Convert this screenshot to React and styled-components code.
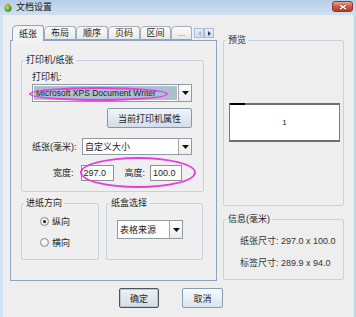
import React from 'react';
import styled, { createGlobalStyle } from 'styled-components';

const GlobalStyle = createGlobalStyle`
  html, body {
    margin: 0;
    padding: 0;
    background: #eeeeee;
  }
  body {
    font-family: "Liberation Sans", "Noto Sans CJK SC", sans-serif;
    font-size: 9px;
    color: #1e1e1e;
  }
  * {
    box-sizing: border-box;
  }
`;

const Window = styled.div`
  width: 356px;
  height: 317px;
  display: flex;
  flex-direction: column;
  overflow: hidden;
  background: #eeeeee;
`;

const TitleBar = styled.div`
  height: 15px;
  flex: none;
  display: flex;
  align-items: flex-start;
  padding-left: 4px;
  background: linear-gradient(#b7cee8, #d0e0f2);
`;

const TitleIcon = styled.svg`
  margin-top: 3px;
  flex: none;
`;

const Title = styled.span`
  margin-left: 4px;
  line-height: 14px;
  color: #1a1a1a;
`;

const CloseButton = styled.div`
  margin-left: auto;
  margin-right: 3px;
  margin-top: 1px;
  width: 21px;
  height: 11px;
  border: 1px solid #8a3a2c;
  border-radius: 3px;
  background: linear-gradient(#e9a492, #cf5a44 50%, #b93b26);
  display: flex;
  align-items: center;
  justify-content: center;
`;

const Body = styled.div`
  flex: 1;
  display: flex;
  flex-direction: column;
  border-left: 3px solid #d3e2f2;
  border-right: 2px solid #bcd5ee;
  padding: 10px 10px 0 7px;
`;

const Main = styled.div`
  display: flex;
  gap: 6px;
`;

const LeftColumn = styled.div`
  width: 207px;
  display: flex;
  flex-direction: column;
`;

const TabStrip = styled.div`
  height: 16px;
  margin-bottom: -1px;
  display: flex;
  align-items: flex-end;
  padding-left: 2px;
  position: relative;
  z-index: 1;
`;

const Tab = styled.div`
  width: ${p => p.$w}px;
  height: ${p => (p.$active ? 16 : 14)}px;
  margin-bottom: ${p => (p.$active ? 0 : 1)}px;
  border: 1px solid ${p => (p.$active ? '#8ea3bd' : '#a3afbd')};
  border-bottom: ${p => (p.$active ? 'none' : '1px solid #8ea3bd')};
  border-radius: 5px 3px 0 0;
  background: ${p =>
    p.$active ? '#f1f4f8' : 'linear-gradient(#fbfbfb, #e8e8e8)'};
  display: flex;
  align-items: center;
  justify-content: center;
  line-height: 12px;
  color: ${p => (p.$muted ? '#777' : '#1e1e1e')};
`;

const ScrollButtons = styled.div`
  display: flex;
  margin-left: 2px;
  margin-bottom: 3px;
`;

const ScrollButton = styled.div`
  width: 10px;
  height: 10px;
  border: 1px solid #a9bfd6;
  background: linear-gradient(#e6eff8, #cbdcee);
  display: flex;
  align-items: center;
  justify-content: center;
`;

const TabPanel = styled.div`
  height: 241px;
  border: 1px solid #8ea3bd;
  background: #efefef;
  padding: 14px 12px 0 10px;
`;

const Group = styled.fieldset`
  margin: 0;
  padding: 0;
  min-width: 0;
  border: 1px solid #c6d2df;
  border-radius: 2px;
`;

const Legend = styled.legend`
  padding: 0 2px;
  margin-left: 2px;
  line-height: 10px;
  font-size: 9px;
`;

const PrinterBody = styled.div`
  padding: 6px 11px 10px 10px;
  display: flex;
  flex-direction: column;
`;

const FieldLabel = styled.div`
  line-height: 12px;
  flex: none;
  width: ${p => (p.$w ? `${p.$w}px` : 'auto')};
  margin-left: ${p => p.$ml || 0}px;
`;

const ComboWrap = styled.div`
  position: relative;
  margin-top: 1px;
  height: 18px;
  display: flex;
`;

const ComboBox = styled.div`
  flex: 1;
  width: ${p => (p.$w ? `${p.$w}px` : 'auto')};
  height: ${p => p.$h}px;
  display: flex;
  border: 1px solid #8f9aa7;
  background: #fff;
`;

const ComboField = styled.div`
  flex: 1;
  display: flex;
  align-items: center;
  padding-left: 2px;
  white-space: nowrap;
  overflow: hidden;
  font-size: ${p => (p.$selected ? '8.5px' : '9px')};
  background: ${p => (p.$selected ? '#aebed2' : '#fff')};
  margin: ${p => (p.$selected ? '1px' : '0')};
`;

const ComboArrow = styled.div`
  width: 13px;
  flex: none;
  border-left: 1px solid #a5a5a5;
  background: linear-gradient(#fdfdfd, #ececec);
  display: flex;
  align-items: center;
  justify-content: center;
`;

const Ellipse = styled.div`
  position: absolute;
  left: ${p => p.$l}px;
  top: ${p => p.$t}px;
  width: ${p => p.$w}px;
  height: ${p => p.$h}px;
  border: 2px solid #e23fe2;
  border-radius: 50%;
  pointer-events: none;
`;

const PropsButton = styled.div`
  align-self: flex-end;
  margin-top: 6px;
  width: 85px;
  height: 20px;
  border: 1px solid #8898ab;
  border-radius: 2px;
  background: linear-gradient(#f1f5f9, #d3dde8);
  display: flex;
  align-items: center;
  justify-content: center;
`;

const Row = styled.div`
  display: flex;
  align-items: center;
  margin-top: 10px;
  height: ${p => p.$h}px;
  position: relative;
`;

const NumberInput = styled.div`
  width: ${p => p.$w}px;
  height: 16px;
  margin-left: ${p => p.$gap}px;
  border: 1px solid #8e8f8f;
  background: #fff;
  padding-left: 2px;
  line-height: 14px;
  flex: none;
`;

const LowerGroups = styled.div`
  display: grid;
  grid-template-columns: 78px 97px;
  gap: 7px;
  margin-top: 6px;
`;

const RadioBody = styled.div`
  padding: 7px 0 11px 18px;
  display: flex;
  flex-direction: column;
  gap: 9px;
`;

const RadioRow = styled.div`
  display: flex;
  align-items: center;
  gap: 3px;
  height: 12px;
`;

const RadioCircle = styled.span`
  width: 9px;
  height: 9px;
  border: 1px solid #8a8a8a;
  border-radius: 50%;
  background: radial-gradient(circle at 40% 35%, #ffffff, #dcdcdc);
  display: flex;
  align-items: center;
  justify-content: center;
  &::after {
    content: '';
    width: 3px;
    height: 3px;
    border-radius: 50%;
    background: ${p => (p.$checked ? '#1a1a1a' : 'transparent')};
  }
`;

const TrayBody = styled.div`
  padding: 12px 0 0 10px;
`;

const RightColumn = styled.div`
  width: 121px;
  padding-top: 10px;
  display: flex;
  flex-direction: column;
`;

const PreviewGroup = styled(Group)`
  height: 171px;
`;

const PreviewBody = styled.div`
  padding: 58px 0 0 5px;
`;

const Paper = styled.div`
  position: relative;
  width: 111px;
  height: 39px;
  background: #fff;
  border-top: 2px solid #6f6f6f;
  border-bottom: 2px solid #6f6f6f;
  border-left: 1px solid #7a7a7a;
  border-right: 1px solid #7a7a7a;
  display: flex;
  align-items: center;
  justify-content: center;
  font-size: 8px;
  &::before {
    content: '';
    position: absolute;
    top: -2px;
    left: 0;
    width: 15px;
    height: 2px;
    background: #000;
  }
`;

const InfoGroup = styled(Group)`
  height: 66px;
  margin-top: 8px;
`;

const InfoBody = styled.div`
  padding: 11px 0 0 16px;
  display: flex;
  flex-direction: column;
  gap: 10px;
`;

const InfoLine = styled.div`
  line-height: 12px;
  color: #333;
`;

const Footer = styled.div`
  display: flex;
  gap: 23px;
  margin-top: 7px;
  padding-left: 109px;
`;

const DialogButton = styled.div`
  width: ${p => p.$w}px;
  height: 20px;
  border: 1px solid ${p => (p.$default ? '#4a5563' : '#8a9cb0')};
  box-shadow: ${p => (p.$default ? 'inset 0 0 0 1px #b9c6d4' : 'none')};
  border-radius: 2px;
  background: ${p =>
    p.$default
      ? 'linear-gradient(#eef1f4, #d6dde5)'
      : 'linear-gradient(#f7fafd, #d7e3ef)'};
  display: flex;
  align-items: center;
  justify-content: center;
`;

const DownArrow = () => (
  <svg width="7" height="4" viewBox="0 0 7 4">
    <polygon points="0,0 7,0 3.5,4" fill="#111" />
  </svg>
);

const Combo = ({ value, selected, w, h }) => (
  <ComboBox $w={w} $h={h}>
    <ComboField $selected={selected}>{value}</ComboField>
    <ComboArrow>
      <DownArrow />
    </ComboArrow>
  </ComboBox>
);

const tabs = [
  { label: '纸张', w: 32, active: true },
  { label: '布局', w: 32 },
  { label: '顺序', w: 32 },
  { label: '页码', w: 32 },
  { label: '区间', w: 31 },
  { label: '...', w: 21, muted: true },
];

export default function App() {
  return (
    <>
      <GlobalStyle />
      <Window>
        <TitleBar>
          <TitleIcon width="8" height="9" viewBox="0 0 8 9">
            <defs>
              <radialGradient id="ball" cx="40%" cy="40%" r="60%">
                <stop offset="0" stopColor="#b6ec6a" />
                <stop offset="1" stopColor="#2f8a18" />
              </radialGradient>
            </defs>
            <circle cx="4" cy="5.3" r="3.5" fill="url(#ball)" />
            <ellipse cx="4" cy="1.6" rx="1.6" ry="1.4" fill="#f0a020" />
          </TitleIcon>
          <Title>文档设置</Title>
          <CloseButton>
            <svg width="8" height="6" viewBox="0 0 8 6">
              <path d="M1 0.8 L7 5.2 M7 0.8 L1 5.2" stroke="#7a2a1e" strokeWidth="2.6" />
              <path d="M1 0.8 L7 5.2 M7 0.8 L1 5.2" stroke="#fff" strokeWidth="1.5" />
            </svg>
          </CloseButton>
        </TitleBar>
        <Body>
          <Main>
            <LeftColumn>
              <TabStrip>
                {tabs.map(t => (
                  <Tab key={t.label} $w={t.w} $active={t.active} $muted={t.muted}>
                    {t.label}
                  </Tab>
                ))}
                <ScrollButtons>
                  <ScrollButton>
                    <svg width="3" height="5" viewBox="0 0 3 5">
                      <polygon points="3,0 3,5 0,2.5" fill="#a9b4c0" />
                    </svg>
                  </ScrollButton>
                  <ScrollButton>
                    <svg width="3" height="5" viewBox="0 0 3 5">
                      <polygon points="0,0 0,5 3,2.5" fill="#3c4650" />
                    </svg>
                  </ScrollButton>
                </ScrollButtons>
              </TabStrip>
              <TabPanel>
                <Group>
                  <Legend>打印机/纸张</Legend>
                  <PrinterBody>
                    <FieldLabel>打印机:</FieldLabel>
                    <ComboWrap>
                      <Combo value="Microsoft XPS Document Writer" selected h={18} />
                      <Ellipse $l={-3} $t={3} $w={139} $h={14} />
                    </ComboWrap>
                    <PropsButton>当前打印机属性</PropsButton>
                    <Row $h={17}>
                      <FieldLabel $w={50}>纸张(毫米):</FieldLabel>
                      <Combo value="自定义大小" h={17} />
                    </Row>
                    <Row $h={16}>
                      <FieldLabel $ml={21}>宽度:</FieldLabel>
                      <NumberInput $w={33} $gap={7}>297.0</NumberInput>
                      <FieldLabel $ml={11}>高度:</FieldLabel>
                      <NumberInput $w={32} $gap={5}>100.0</NumberInput>
                      <Ellipse $l={48} $t={-8} $w={116} $h={31} />
                    </Row>
                  </PrinterBody>
                </Group>
                <LowerGroups>
                  <Group>
                    <Legend>进纸方向</Legend>
                    <RadioBody>
                      <RadioRow>
                        <RadioCircle $checked />
                        纵向
                      </RadioRow>
                      <RadioRow>
                        <RadioCircle />
                        横向
                      </RadioRow>
                    </RadioBody>
                  </Group>
                  <Group>
                    <Legend>纸盒选择</Legend>
                    <TrayBody>
                      <Combo value="表格来源" w={66} h={19} />
                    </TrayBody>
                  </Group>
                </LowerGroups>
              </TabPanel>
            </LeftColumn>
            <RightColumn>
              <PreviewGroup>
                <Legend>预览</Legend>
                <PreviewBody>
                  <Paper>1</Paper>
                </PreviewBody>
              </PreviewGroup>
              <InfoGroup>
                <Legend>信息(毫米)</Legend>
                <InfoBody>
                  <InfoLine>纸张尺寸: 297.0 x 100.0</InfoLine>
                  <InfoLine>标签尺寸: 289.9 x 94.0</InfoLine>
                </InfoBody>
              </InfoGroup>
            </RightColumn>
          </Main>
          <Footer>
            <DialogButton $w={40} $default>确定</DialogButton>
            <DialogButton $w={41}>取消</DialogButton>
          </Footer>
        </Body>
      </Window>
    </>
  );
}
